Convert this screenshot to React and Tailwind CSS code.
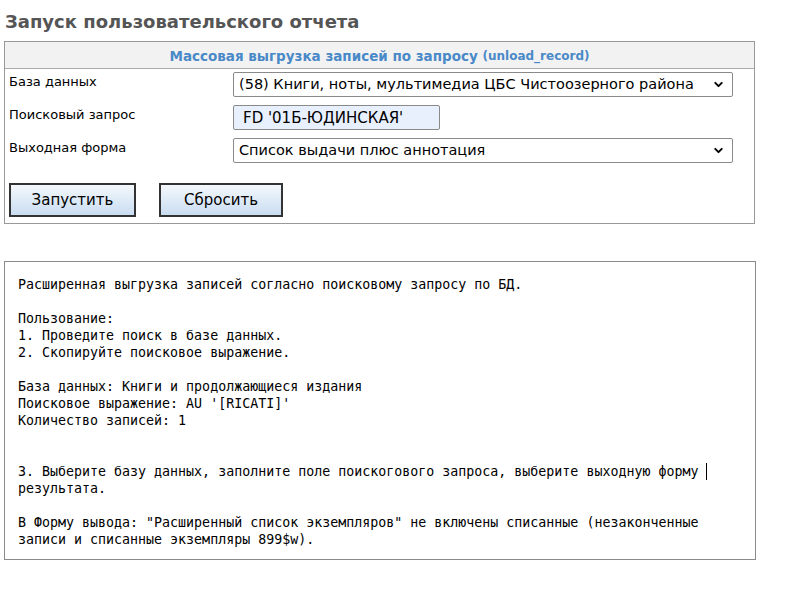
import { ChevronDown } from 'lucide-react';

const helpLines = [
  'Расширенная выгрузка записей согласно поисковому запросу по БД.',
  '',
  'Пользование:',
  '1. Проведите поиск в базе данных.',
  '2. Скопируйте поисковое выражение.',
  '',
  'База данных: Книги и продолжающиеся издания',
  "Поисковое выражение: AU '[RICATI]'",
  'Количество записей: 1',
  '',
  '',
  '3. Выберите базу данных, заполните поле поискогового запроса, выберите выходную форму',
  'результата.',
  '',
  'В Форму вывода: "Расширенный список экземпляров" не включены списанные (незаконченные',
  'записи и списанные экземпляры 899$w).',
];

function Select({ value }) {
  return (
    <div className="relative w-[500px]">
      <select
        value={value}
        onChange={() => {}}
        className="block h-[25px] w-full appearance-none rounded-[2px] border border-[#8a8a8a] bg-white pl-[5px] pr-6 text-[14.5px] leading-[23px] text-black outline-none"
      >
        <option value={value}>{value}</option>
      </select>
      <ChevronDown
        className="pointer-events-none absolute right-[8px] top-[6px] h-[13px] w-[13px] text-black"
        strokeWidth={3.5}
      />
    </div>
  );
}

function FormRow({ label, children }) {
  return (
    <div className="flex items-start">
      <div className="w-[224px] pt-[1px] text-[13px] leading-[18px] text-black">{label}</div>
      {children}
    </div>
  );
}

function ActionButton({ children, className = '' }) {
  return (
    <button
      type="button"
      className={`h-[34px] border-2 border-[#333] bg-gradient-to-b from-[#f4f8fc] to-[#c9ddf1] text-[15px] text-black ${className}`}
    >
      {children}
    </button>
  );
}

export default function App() {
  return (
    <div className="min-h-[603px] bg-white px-[4px] font-['DejaVu_Sans',sans-serif]">
      <h1 className="flex h-[41px] items-center pl-[1px] pt-[1px] text-[18px] font-bold text-[#555]">
        Запуск пользовательского отчета
      </h1>

      <div className="w-[751px] border border-[#999]">
        <div className="flex h-[27px] items-center justify-center border-b border-[#aaa] bg-[#f2f2f2] pt-[2px] text-[13.5px] font-bold text-[#4a89c8]">
          Массовая выгрузка записей по запросу&nbsp;
          <span className="text-[12px]">(unload_record)</span>
        </div>

        <div className="flex flex-col gap-[8px] px-[4px] pt-[3px]">
          <FormRow label="База данных">
            <Select value="(58) Книги, ноты, мультимедиа ЦБС Чистоозерного района" />
          </FormRow>
          <FormRow label="Поисковый запрос">
            <input
              readOnly
              value="FD '01Б-ЮДИНСКАЯ'"
              className="h-[25px] w-[207px] rounded-[2px] border border-[#8a8a8a] bg-[#e8f0fe] pl-[9px] text-[15px] text-black outline-none"
            />
          </FormRow>
          <FormRow label="Выходная форма">
            <Select value="Список выдачи плюс аннотация" />
          </FormRow>
        </div>

        <div className="flex gap-[23px] px-[4px] pt-[20px] pb-[6px]">
          <ActionButton className="w-[127px]">Запустить</ActionButton>
          <ActionButton className="w-[124px]">Сбросить</ActionButton>
        </div>
      </div>

      <div className="mt-[37px] h-[299px] w-[752px] border border-[#8a8a8a] px-[13px] pt-[14px] font-['DejaVu_Sans_Mono',monospace] text-[13.3px] leading-[17px] text-black">
        {helpLines.map((line, i) => (
          <div key={i} className="h-[17px] whitespace-pre">
            {line}
            {i === 11 && <span className="ml-[8px] inline-block h-[17px] w-px bg-black align-top" />}
          </div>
        ))}
      </div>
    </div>
  );
}
